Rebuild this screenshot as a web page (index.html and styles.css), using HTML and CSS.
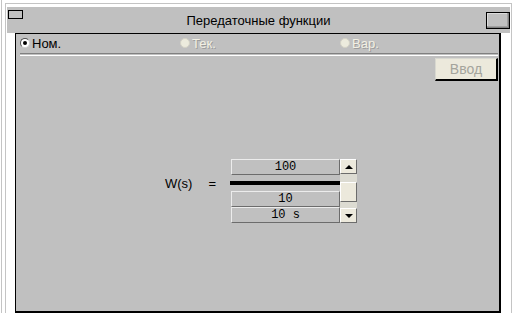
FILE: index.html
```html
<!DOCTYPE html>
<html lang="ru">
<head>
    <meta charset="UTF-8">
    <title>Передаточные функции</title>
    <link rel="stylesheet" href="styles.css">
</head>
<body>
    <div class="screen">
        <div class="frame">
            <div class="titlebar">
                <span class="sysbox"></span>
                <span class="title">Передаточные функции</span>
                <button class="maxbtn"></button>
            </div>
            <div class="panel">
                <div class="tabs">
                    <label class="radio on"><span class="circle"></span>Ном.</label>
                    <label class="radio off"><span class="circle"></span>Тек.</label>
                    <label class="radio off"><span class="circle"></span>Вар.</label>
                </div>
                <div class="sep"></div>
                <div class="toolbar">
                    <button class="enter">Ввод</button>
                </div>
                <div class="formula">
                    <span class="lhs">W(s)</span>
                    <span class="eq">=</span>
                    <div class="spin">
                        <div class="fields">
                            <div class="field">100</div>
                            <div class="bar"></div>
                            <div class="field">10</div>
                            <div class="field">10 s</div>
                        </div>
                        <div class="scroll">
                            <div class="arrow up"></div>
                            <div class="track">
                                <div class="thumb"></div>
                            </div>
                            <div class="arrow down"></div>
                        </div>
                    </div>
                </div>
            </div>
        </div>
    </div>
</body>
</html>
```

FILE: styles.css
```css
body {
    margin: 0;
    background-color: #fff;
    font-family: "Liberation Sans", Arial, sans-serif;
    font-size: 13px;
    color: #000;
    overflow: hidden;
}
.screen {
    margin-left: 1px;
    height: 313px;
    border-left: 1px solid #c4c4c4;
}
.frame {
    margin-left: 3px;
    padding-top: 3px;
    width: 505px;
    height: 310px;
    border: 1px solid #c4c4c4;
    border-bottom: none;
    position: relative;
    top: 3px;
}
.titlebar {
    margin-left: 1px;
    width: 503px;
    height: 26px;
    background-color: #c0c0c0;
    display: grid;
    grid-template-columns: 1fr auto 1fr;
    align-items: center;
}
.sysbox {
    justify-self: start;
    align-self: start;
    margin: 3px 0 0 1px;
    width: 13px;
    height: 7px;
    border: 1px solid #000;
}
.title {
    padding-top: 1px;
}
.maxbtn {
    justify-self: end;
    align-self: start;
    margin-top: 5px;
    width: 24px;
    height: 17px;
    padding: 0;
    background-color: #c0c0c0;
    border: 1px solid #000;
    box-shadow: inset -1px -1px 0 #808080, inset -2px -2px 0 #a0a0a0, inset 1px 1px 0 #dcdcdc;
}
.panel {
    margin-left: 9px;
    width: 478px;
    height: 277px;
    background-color: #c0c0c0;
    border-top: 1px solid #000;
    border-left: 1px solid #000;
    border-right: 2px solid #000;
    border-bottom: 2px solid #000;
    padding: 0 1px 0 4px;
}
.tabs {
    display: grid;
    grid-template-columns: 160px 160px 158px;
    height: 18px;
    margin-bottom: 1px;
}
.radio {
    display: flex;
    align-items: center;
    gap: 2px;
}
.circle {
    width: 10px;
    height: 10px;
    border-radius: 50%;
    box-sizing: border-box;
    position: relative;
}
.on .circle {
    background-color: #fff;
    border: 1px solid #505050;
    border-right-color: #d0d0d0;
    border-bottom-color: #d0d0d0;
}
.on .circle::after {
    content: "";
    position: absolute;
    left: 2px;
    top: 2px;
    width: 4px;
    height: 4px;
    border-radius: 50%;
    background-color: #000;
}
.off .circle {
    background-color: #ecebdd;
    border: 1px solid #d4d2c6;
}
.off {
    color: #f2f0e4;
    text-shadow: 1px 1px 0 #9c9c9c;
}
.sep {
    height: 1px;
    border-top: 1px solid #808080;
    border-bottom: 1px solid #fff;
}
.toolbar {
    display: flex;
    justify-content: flex-end;
    margin-top: 2px;
}
.enter {
    width: 63px;
    height: 23px;
    padding: 0;
    font-family: "Liberation Sans", Arial, sans-serif;
    font-size: 14px;
    color: #a4a49c;
    background-color: #ece9dc;
    border: 1px solid #d8d8d0;
    border-right: 2px solid #000;
    border-bottom: 2px solid #000;
}
.formula {
    display: flex;
    align-items: flex-start;
    margin-top: 78px;
    padding-left: 145px;
}
.lhs, .eq {
    margin-top: 17px;
    line-height: 16px;
}
.eq {
    margin-left: 16px;
    margin-right: 15px;
}
.spin {
    display: flex;
}
.fields {
    display: flex;
    flex-direction: column;
    width: 109px;
}
.field {
    height: 16px;
    box-sizing: border-box;
    border: 1px solid;
    border-color: #ececec #6c6c6c #6c6c6c #ececec;
    font-family: "Liberation Mono", "Courier New", monospace;
    font-size: 12px;
    line-height: 14px;
    text-align: center;
    white-space: pre;
}
.bar {
    height: 4px;
    margin: 6px 0 6px -1px;
    background-color: #000;
}
.scroll {
    width: 17px;
    display: flex;
    flex-direction: column;
}
.arrow {
    height: 15px;
    box-sizing: border-box;
    background-color: #ece9dc;
    border: 1px solid;
    border-color: #fff #6c6c6c #6c6c6c #fff;
    display: flex;
    align-items: center;
    justify-content: center;
}
.arrow::after {
    content: "";
    border-left: 4px solid transparent;
    border-right: 4px solid transparent;
}
.up::after {
    border-bottom: 4px solid #000;
}
.down::after {
    border-top: 4px solid #000;
}
.track {
    flex: 1;
    background-color: #dcdbd2;
    padding-top: 8px;
    padding-bottom: 6px;
}
.thumb {
    height: 100%;
    box-sizing: border-box;
    background-color: #ece9dc;
    border: 1px solid;
    border-color: #fff #6c6c6c #6c6c6c #fff;
}
```
